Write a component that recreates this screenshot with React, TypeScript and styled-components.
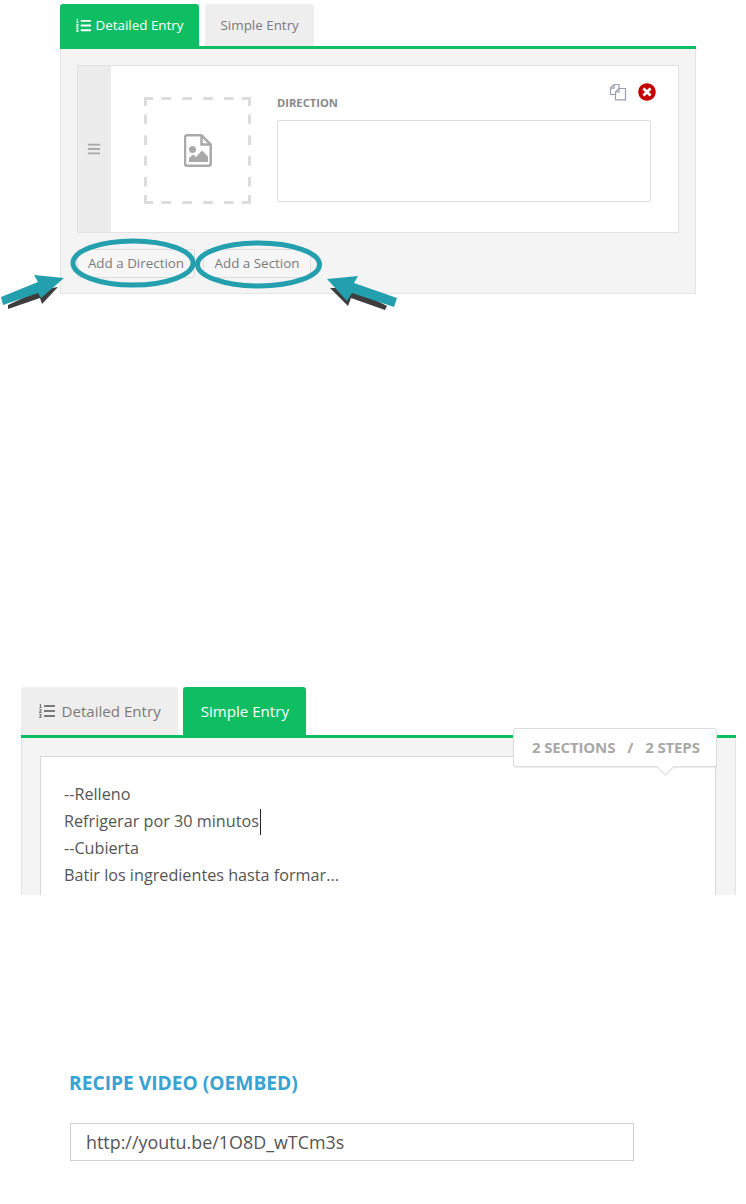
import React from "react";
import styled, { createGlobalStyle } from "styled-components";
import { FaListOl, FaTimesCircle, FaBars } from "react-icons/fa";

const GlobalStyle = createGlobalStyle`
  html, body {
    margin: 0;
    padding: 0;
    background: #fff;
    font-family: "Open Sans", "Liberation Sans", sans-serif;
  }
`;

const Page = styled.div`
  width: 746px;
  height: 1204px;
  overflow: hidden;
  padding-top: 4px;
  box-sizing: border-box;
`;

const DetailedSection = styled.section`
  position: relative;
  width: 636px;
  margin-left: 60px;
`;

const SimpleSection = styled.section`
  position: relative;
  width: 715px;
  margin: 393px 0 0 21px;
`;

const TabBar = styled.div<{ $big?: boolean }>`
  display: flex;
  gap: ${(p) => (p.$big ? "5px" : "6px")};
  height: ${(p) => (p.$big ? "48px" : "42px")};
  border-bottom: 3px solid #0fbe63;
`;

const Tab = styled.div<{ $active?: boolean; $big?: boolean }>`
  display: flex;
  align-items: center;
  gap: ${(p) => (p.$big ? "7px" : "5px")};
  box-sizing: border-box;
  height: ${(p) => (p.$big ? "48px" : "42px")};
  padding: 0 ${(p) => (p.$big ? "17.5px" : "15.5px")};
  border-radius: 3px 3px 0 0;
  font-size: ${(p) => (p.$big ? "15.1px" : "13.4px")};
  background: ${(p) => (p.$active ? "#0fbe63" : "#eeeeee")};
  color: ${(p) => (p.$active ? "#fff" : "#7a7a7a")};
  svg {
    font-size: ${(p) => (p.$big ? "16px" : "15px")};
  }
`;

const Panel = styled.div`
  box-sizing: border-box;
  height: 245px;
  padding: 16px 16px 0;
  background: #f4f4f4;
  border: 1px solid #e4e4e4;
  border-top: none;
`;

const DirectionRow = styled.div`
  display: flex;
  height: 168px;
  box-sizing: border-box;
  border: 1px solid #e2e2e2;
  background: #fff;
`;

const Handle = styled.div`
  display: flex;
  align-items: center;
  justify-content: center;
  width: 33px;
  padding-right: 2px;
  box-sizing: border-box;
  background: #ececec;
  color: #a8a8a8;
  font-size: 14px;
`;

const DirectionBody = styled.div`
  position: relative;
  flex: 1;
  display: flex;
  gap: 26px;
  padding: 31px 27px 0 33px;
`;

const ImageDrop = styled.div`
  position: relative;
  display: flex;
  align-items: center;
  justify-content: center;
  width: 107px;
  height: 107px;
  flex: none;
`;

const DropOutline = styled.svg`
  position: absolute;
  inset: 0;
`;

const DirectionField = styled.div`
  flex: 1;
  display: flex;
  flex-direction: column;
`;

const FieldLabel = styled.label`
  height: 24px;
  margin-top: -1px;
  font-size: 11.2px;
  line-height: 14px;
  font-weight: 700;
  color: #888;
`;

const TextBox = styled.div`
  box-sizing: border-box;
  height: 82px;
  border: 1px solid #dedede;
  border-radius: 2px;
  background: #fff;
`;

const RowActions = styled.div`
  position: absolute;
  top: 17px;
  right: 22px;
  display: flex;
  align-items: center;
  gap: 11px;
`;

const ButtonRow = styled.div`
  display: flex;
  gap: 8px;
  margin-top: 16px;
`;

const AddButton = styled.button<{ $width: number }>`
  width: ${(p) => p.$width}px;
  height: 29px;
  padding: 0 0 1px;
  border: 1px solid #dcdcdc;
  border-radius: 3px;
  background: #f6f6f6;
  color: #7a7a7a;
  font-family: inherit;
  font-size: 13.4px;
`;

const Annotation = styled.svg`
  position: absolute;
  left: -60px;
  top: 221px;
  pointer-events: none;
`;

const SimplePanel = styled.div`
  box-sizing: border-box;
  height: 157px;
  padding: 18px 19px 0 18px;
  background: #f4f4f4;
  border-left: 1px solid #e4e4e4;
  border-right: 1px solid #e4e4e4;
  overflow: hidden;
`;

const SimpleEditor = styled.div`
  box-sizing: border-box;
  height: 160px;
  padding: 24px 23px;
  border: 1px solid #d8d8d8;
  background: #fff;
  font-size: 16.2px;
  line-height: 26.5px;
  color: #555;
`;

const Caret = styled.span`
  display: inline-block;
  width: 1px;
  height: 26px;
  margin-left: 1px;
  vertical-align: middle;
  background: #222;
`;

const CountBubble = styled.div`
  position: absolute;
  top: 41px;
  right: 19px;
  display: flex;
  align-items: center;
  gap: 12px;
  box-sizing: border-box;
  width: 204px;
  height: 39px;
  padding: 0 0 2px 18px;
  background: #fff;
  border: 1px solid #dcdcdc;
  border-radius: 3px;
  box-shadow: 0 1px 1px rgba(0, 0, 0, 0.08);
  font-size: 15px;
  font-weight: 700;
  letter-spacing: -0.15px;
  color: #a8a8a8;
  &::after {
    content: "";
    position: absolute;
    right: 44px;
    bottom: -7px;
    width: 12px;
    height: 12px;
    background: #fff;
    border-right: 1px solid #dcdcdc;
    border-bottom: 1px solid #dcdcdc;
    transform: rotate(45deg);
  }
`;

const VideoSection = styled.section`
  margin: 176px 0 0 69px;
`;

const VideoHeading = styled.h3`
  margin: 0;
  height: 52px;
  font-size: 19.2px;
  line-height: 24px;
  font-weight: 700;
  color: #36a3d3;
`;

const VideoInput = styled.div`
  box-sizing: border-box;
  width: 564px;
  height: 38px;
  margin-left: 1px;
  padding-left: 15px;
  border: 1px solid #cfcfcf;
  font-size: 17.9px;
  line-height: 36px;
  color: #555;
`;

const CopyIcon = () => (
  <svg width="18" height="18" viewBox="0 0 18 18" fill="none">
    <path d="M6 11.5H1.5V5L5 1.5h5v3.5" stroke="#97a0ad" strokeWidth="1.2" />
    <path d="M1.5 5.2H5V1.7" stroke="#97a0ad" strokeWidth="1.2" />
    <path
      d="M6.5 9L10 5.5h6.5V16.8H6.5z"
      fill="#fff"
      stroke="#97a0ad"
      strokeWidth="1.2"
    />
    <path d="M6.5 9H10V5.5" stroke="#97a0ad" strokeWidth="1.2" />
  </svg>
);

const ImageFileIcon = () => (
  <svg width="28" height="33" viewBox="0 0 28 33" fill="none">
    <path
      d="M3 1.3H17.5L26.7 10.5V29.7a2 2 0 0 1-2 2H3a2 2 0 0 1-2-2V3.3a2 2 0 0 1 2-2z"
      stroke="#a9a9a9"
      strokeWidth="2.5"
    />
    <path d="M17.5 1.5V10.5H26.5" stroke="#a9a9a9" strokeWidth="2.5" />
    <circle cx="8.5" cy="15.5" r="3.5" fill="#a9a9a9" />
    <path d="M5 28V24L9 20.5L12 23L18 16.5L24 22.5V28z" fill="#a9a9a9" />
  </svg>
);

// Dashed frame with closed corners, like the placeholder in the screenshot
const DashedFrame = () => (
  <DropOutline width="107" height="107" viewBox="0 0 107 107" fill="none">
    <rect
      x="1.5"
      y="1.5"
      width="104"
      height="104"
      stroke="#dcdcdc"
      strokeWidth="3"
      strokeDasharray="9.6 11.2"
      strokeDashoffset="4.8"
    />
    <path
      d="M1.5 9V1.5H9M98 1.5H105.5V9M105.5 98V105.5H98M9 105.5H1.5V98"
      stroke="#dcdcdc"
      strokeWidth="3"
    />
  </DropOutline>
);

// Teal callouts drawn over the two add buttons
const Callouts = () => (
  <Annotation width="420" height="90" viewBox="0 225 420 90" fill="none">
    <ellipse cx="133" cy="263" rx="60" ry="22" stroke="#239fae" strokeWidth="5" />
    <ellipse cx="258.5" cy="264.5" rx="61" ry="21.5" stroke="#239fae" strokeWidth="5" />
    <path d="M8 305L8 309L40 298L42 304L58 287L40 290z" fill="#3d3d3d" />
    <path d="M1 297L38 282L34 275L64 278L41 298L38 293L3 305z" fill="#239fae" />
    <path d="M330 288L348 306L351 298L385 310L387 306L352 288z" fill="#3d3d3d" />
    <path d="M327 279L358 276L354 283L397 298L394 307L352 293L347 301z" fill="#239fae" />
  </Annotation>
);

const App: React.FC = () => {
  return (
    <Page>
      <GlobalStyle />
      <DetailedSection>
        <TabBar>
          <Tab $active>
            <FaListOl />
            Detailed Entry
          </Tab>
          <Tab>Simple Entry</Tab>
        </TabBar>
        <Panel>
          <DirectionRow>
            <Handle>
              <FaBars />
            </Handle>
            <DirectionBody>
              <ImageDrop>
                <DashedFrame />
                <ImageFileIcon />
              </ImageDrop>
              <DirectionField>
                <FieldLabel>DIRECTION</FieldLabel>
                <TextBox />
              </DirectionField>
              <RowActions>
                <CopyIcon />
                <FaTimesCircle color="#c40000" size={18} />
              </RowActions>
            </DirectionBody>
          </DirectionRow>
          <ButtonRow>
            <AddButton $width={118}>Add a Direction</AddButton>
            <AddButton $width={108}>Add a Section</AddButton>
          </ButtonRow>
        </Panel>
        <Callouts />
      </DetailedSection>

      <SimpleSection>
        <TabBar $big>
          <Tab $big>
            <FaListOl />
            Detailed Entry
          </Tab>
          <Tab $big $active>
            Simple Entry
          </Tab>
        </TabBar>
        <SimplePanel>
          <SimpleEditor>
            <div>--Relleno</div>
            <div>
              Refrigerar por 30 minutos
              <Caret />
            </div>
            <div>--Cubierta</div>
            <div>Batir los ingredientes hasta formar...</div>
          </SimpleEditor>
        </SimplePanel>
        <CountBubble>
          <span>2 SECTIONS</span>
          <span>/</span>
          <span>2 STEPS</span>
        </CountBubble>
      </SimpleSection>

      <VideoSection>
        <VideoHeading>RECIPE VIDEO (OEMBED)</VideoHeading>
        <VideoInput>http://youtu.be/1O8D_wTCm3s</VideoInput>
      </VideoSection>
    </Page>
  );
};

export default App;
